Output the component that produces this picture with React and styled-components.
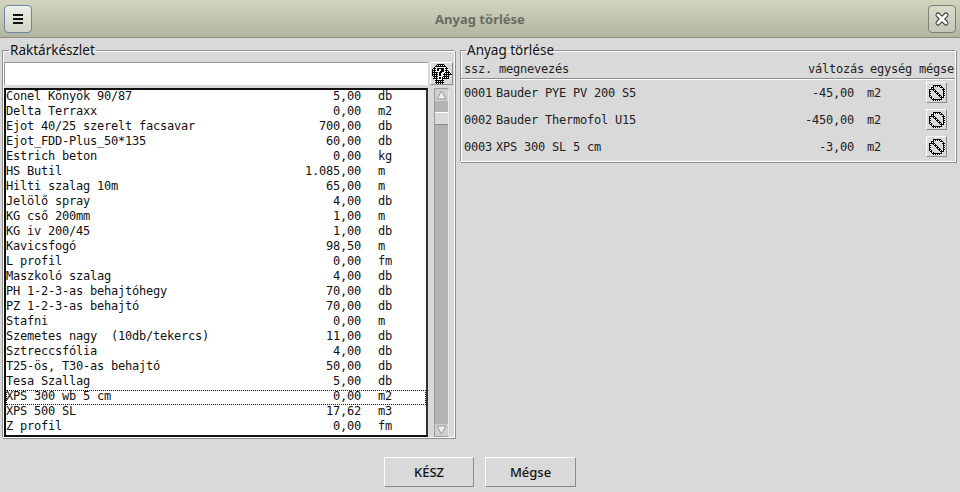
import React from "react";
import styled, { createGlobalStyle } from "styled-components";

const stock = [
  ["Conel Könyök 90/87", "5,00", "db"],
  ["Delta Terraxx", "0,00", "m2"],
  ["Ejot 40/25 szerelt facsavar", "700,00", "db"],
  ["Ejot_FDD-Plus_50*135", "60,00", "db"],
  ["Estrich beton", "0,00", "kg"],
  ["HS Butil", "1.085,00", "m"],
  ["Hilti szalag 10m", "65,00", "m"],
  ["Jelölő spray", "4,00", "db"],
  ["KG cső 200mm", "1,00", "m"],
  ["KG iv 200/45", "1,00", "db"],
  ["Kavicsfogó", "98,50", "m"],
  ["L profil", "0,00", "fm"],
  ["Maszkoló szalag", "4,00", "db"],
  ["PH 1-2-3-as behajtóhegy", "70,00", "db"],
  ["PZ 1-2-3-as behajtó", "70,00", "db"],
  ["Stafni", "0,00", "m"],
  ["Szemetes nagy  (10db/tekercs)", "11,00", "db"],
  ["Sztreccsfólia", "4,00", "db"],
  ["T25-ös, T30-as behajtó", "50,00", "db"],
  ["Tesa Szallag", "5,00", "db"],
  ["XPS 300 wb 5 cm", "0,00", "m2"],
  ["XPS 500 SL", "17,62", "m3"],
  ["Z profil", "0,00", "fm"],
];

const removed = [
  ["0001", "Bauder PYE PV 200 S5", "-45,00", "m2"],
  ["0002", "Bauder Thermofol U15", "-450,00", "m2"],
  ["0003", "XPS 300 SL 5 cm", "-3,00", "m2"],
];

const mono = `"DejaVu Sans Mono", "Liberation Mono", monospace`;
const sans = `"Noto Sans", "Open Sans", sans-serif`;

const Global = createGlobalStyle`
  html, body { margin: 0; padding: 0; background: #d9d9d9; }
  body { width: 960px; height: 492px; overflow: hidden; font-family: ${sans}; }
`;

const Page = styled.div`
  width: 960px;
  height: 492px;
  display: flex;
  flex-direction: column;
  background: #d9d9d9;
`;

const Header = styled.header`
  height: 37px;
  flex: none;
  display: flex;
  align-items: center;
  justify-content: space-between;
  padding: 0 4px;
  background: linear-gradient(#d2d4c0, #b2b6a0);
  border-bottom: 1px solid #8f9184;
`;

const HeadButton = styled.button`
  width: 28px;
  height: 28px;
  padding: 0;
  display: flex;
  align-items: center;
  justify-content: center;
  border-radius: 4px;
  border: 1px solid ${(p) => (p.$dark ? "#7c8070" : "#6f84a0")};
  background: ${(p) => (p.$dark ? "linear-gradient(#d8dacb, #c4c7b4)" : "linear-gradient(#eff0ea, #d0d2c4)")};
`;

const Title = styled.h1`
  margin: 0;
  font-size: 13px;
  font-weight: 700;
  color: #6a6c60;
`;

const Body = styled.main`
  flex: 1;
  display: flex;
  align-items: flex-start;
  gap: 5px;
  padding: 5px 4px 0 2px;
`;

const Group = styled.fieldset`
  margin: 0;
  padding: 0 ${(p) => (p.$right ? "0" : "1px")};
  min-width: 0;
  box-sizing: border-box;
  width: ${(p) => p.$width}px;
  height: ${(p) => p.$height}px;
  border: 1px solid #8e8e8e;
  border-right-color: #fff;
  border-bottom-color: #fff;
  box-shadow: inset 1px 1px 0 #fff, 1px 1px 0 #8e8e8e;
`;

const Legend = styled.legend`
  margin-left: 5px;
  padding: 0 1px;
  font-size: 13.5px;
  line-height: 14px;
  color: #111;
`;

const SearchRow = styled.div`
  display: flex;
  gap: 2px;
  margin-top: 5px;
  height: 23px;
`;

const SearchInput = styled.input`
  flex: none;
  width: 424px;
  box-sizing: border-box;
  background: #fff;
  border: none;
  border-top: 1px solid #999;
  border-left: 1px solid #999;
  padding: 0;
  outline: none;
`;

const IconButton = styled.button`
  flex: none;
  width: ${(p) => p.$size}px;
  height: ${(p) => p.$size}px;
  padding: 0;
  display: flex;
  align-items: center;
  justify-content: center;
  background: #d9d9d9;
  border: 1px solid;
  border-color: #fff #8a8a8a #8a8a8a #fff;
`;

const ListRow = styled.div`
  display: flex;
  gap: 6px;
  margin-top: 3px;
  height: 349px;
`;

const List = styled.ul`
  list-style: none;
  margin: 0;
  padding: 0;
  flex: none;
  width: 424px;
  box-sizing: border-box;
  background: #fff;
  border: 2px solid #111;
  border-right-color: #333;
  overflow: hidden;
`;

const StockRow = styled.li`
  display: grid;
  grid-template-columns: 355px 17px 1fr;
  box-sizing: border-box;
  height: 15px;
  font: 12px/12px ${mono};
  letter-spacing: -0.224px;
  white-space: pre;
  color: #111;
  outline: ${(p) => (p.$focused ? "1px dotted #111" : "none")};
  outline-offset: -1px;
`;

const StockCell = styled.span`
  display: flex;
  justify-content: space-between;
`;

const Scrollbar = styled.div`
  flex: none;
  width: 13px;
  display: flex;
  flex-direction: column;
  background: #b3b3b3;
  border: 1px solid #9a9a9a;
  border-right-color: #e6e6e6;
`;

const ScrollArrow = styled.div`
  height: 12px;
  flex: none;
  background: #cfcfcf;
  display: flex;
  align-items: center;
  justify-content: center;
`;

const ScrollTrack = styled.div`
  flex: 1;
  padding-top: 11px;
`;

const ScrollThumb = styled.div`
  height: 11px;
  background: #d9d9d9;
  border-top: 1px solid #fff;
  border-bottom: 1px solid #8a8a8a;
`;

const TableHead = styled.div`
  display: grid;
  grid-template-columns: 1fr 56px 43px 35px;
  column-gap: 6px;
  height: 16px;
  margin-top: 5px;
  padding: 0 1px 0 3px;
  border-bottom: 1px solid #8e8e8e;
  box-shadow: 0 1px 0 #fff;
  font: 12px/15px ${mono};
  letter-spacing: -0.224px;
  color: #222;
  white-space: pre;
`;

const Line = styled.div`
  display: grid;
  grid-template-columns: 32px 1fr 70px 72px 29px;
  align-items: center;
  height: 27px;
  padding-left: 3px;
  font: 12px/14px ${mono};
  letter-spacing: -0.224px;
  color: #222;
  white-space: pre;
`;

const LineAmount = styled.span`
  text-align: right;
`;

const LineUnit = styled.span`
  padding-left: 13px;
`;

const Footer = styled.footer`
  flex: none;
  height: 54px;
  display: flex;
  justify-content: center;
  gap: 11px;
  padding-top: 19px;
  box-sizing: border-box;
`;

const FootButton = styled.button`
  width: ${(p) => p.$width}px;
  height: 30px;
  padding: 0;
  font: 500 13px ${sans};
  color: #111;
  background: #d9d9d9;
  border: 1px solid;
  border-color: #fff #8a8a8a #8a8a8a #fff;
`;

const darkDots = (id) => (
  <pattern id={id} width="2" height="2" patternUnits="userSpaceOnUse">
    <rect width="2" height="2" fill="#000" />
    <rect width="1" height="1" fill="#fff" />
  </pattern>
);

function MenuIcon() {
  return (
    <svg width="12" height="12" viewBox="0 0 12 12">
      <path d="M1 2h10M1 6h10M1 10h10" stroke="#111" strokeWidth="2" />
    </svg>
  );
}

function CloseIcon() {
  return (
    <svg width="16" height="16" viewBox="0 0 16 16">
      <path d="M4 4l8 8M12 4l-8 8" stroke="#333" strokeWidth="5" strokeLinecap="round" />
      <path d="M4 4l8 8M12 4l-8 8" stroke="#fff" strokeWidth="3" strokeLinecap="round" />
    </svg>
  );
}

function HelpIcon() {
  return (
    <svg width="21" height="21" viewBox="0 0 21 21" shapeRendering="crispEdges">
      <defs>{darkDots("helpDots")}</defs>
      <path d="M4 21V16H2V13H1V6H2V4H4V2H6V1H13V2H15V4H17V8H19V10H21V12H18V16H13V21Z" fill="url(#helpDots)" />
      <path d="M5 4H14V10H12V14H7V9H5Z" fill="#fff" />
      <path d="M6 5H13V9H11V10H10V13H8V9H9V8H10V6H8V8H6Z" fill="#000" />
      <rect x="7" y="14" width="4" height="3" fill="#fff" />
      <rect x="8" y="14" width="2" height="2" fill="#000" />
    </svg>
  );
}

function CancelIcon({ id }) {
  return (
    <svg width="18" height="18" viewBox="0 0 18 18" shapeRendering="crispEdges">
      <defs>{darkDots(id)}</defs>
      <circle cx="9" cy="9" r="7.500" fill="none" stroke={`url(#${id})`} strokeWidth="2" />
      <path d="M4 4l10 10" stroke={`url(#${id})`} strokeWidth="2" />
    </svg>
  );
}

export default function App() {
  return (
    <Page>
      <Global />
      <Header>
        <HeadButton aria-label="menu">
          <MenuIcon />
        </HeadButton>
        <Title>Anyag törlése</Title>
        <HeadButton $dark aria-label="bezár">
          <CloseIcon />
        </HeadButton>
      </Header>

      <Body>
        <Group $width={453} $height={395}>
          <Legend>Raktárkészlet</Legend>
          <SearchRow>
            <SearchInput />
            <IconButton $size={23} aria-label="súgó">
              <HelpIcon />
            </IconButton>
          </SearchRow>
          <ListRow>
            <List>
              {stock.map(([name, amount, unit], i) => (
                <StockRow key={name} $focused={i === 20}>
                  <StockCell>
                    <span>{name}</span>
                    <span>{amount}</span>
                  </StockCell>
                  <span />
                  <span>{unit}</span>
                </StockRow>
              ))}
            </List>
            <Scrollbar>
              <ScrollArrow>
                <svg width="11" height="10" viewBox="0 0 11 10">
                  <path d="M5.500 1L10 9H1Z" fill="#eee" stroke="#999" />
                </svg>
              </ScrollArrow>
              <ScrollTrack>
                <ScrollThumb />
              </ScrollTrack>
              <ScrollArrow>
                <svg width="11" height="10" viewBox="0 0 11 10">
                  <path d="M5.500 9L10 1H1Z" fill="#eee" stroke="#999" />
                </svg>
              </ScrollArrow>
            </Scrollbar>
          </ListRow>
        </Group>

        <Group $right $width={496} $height={119}>
          <Legend>Anyag törlése</Legend>
          <TableHead>
            <span>ssz. megnevezés</span>
            <span>változás</span>
            <span>egység</span>
            <span>mégse</span>
          </TableHead>
          {removed.map(([code, name, amount, unit], i) => (
            <Line key={code}>
              <span>{code}</span>
              <span>{name}</span>
              <LineAmount>{amount}</LineAmount>
              <LineUnit>{unit}</LineUnit>
              <IconButton $size={21} aria-label="mégse">
                <CancelIcon id={`cancelDots${i}`} />
              </IconButton>
            </Line>
          ))}
        </Group>
      </Body>

      <Footer>
        <FootButton $width={90}>KÉSZ</FootButton>
        <FootButton $width={91}>Mégse</FootButton>
      </Footer>
    </Page>
  );
}
